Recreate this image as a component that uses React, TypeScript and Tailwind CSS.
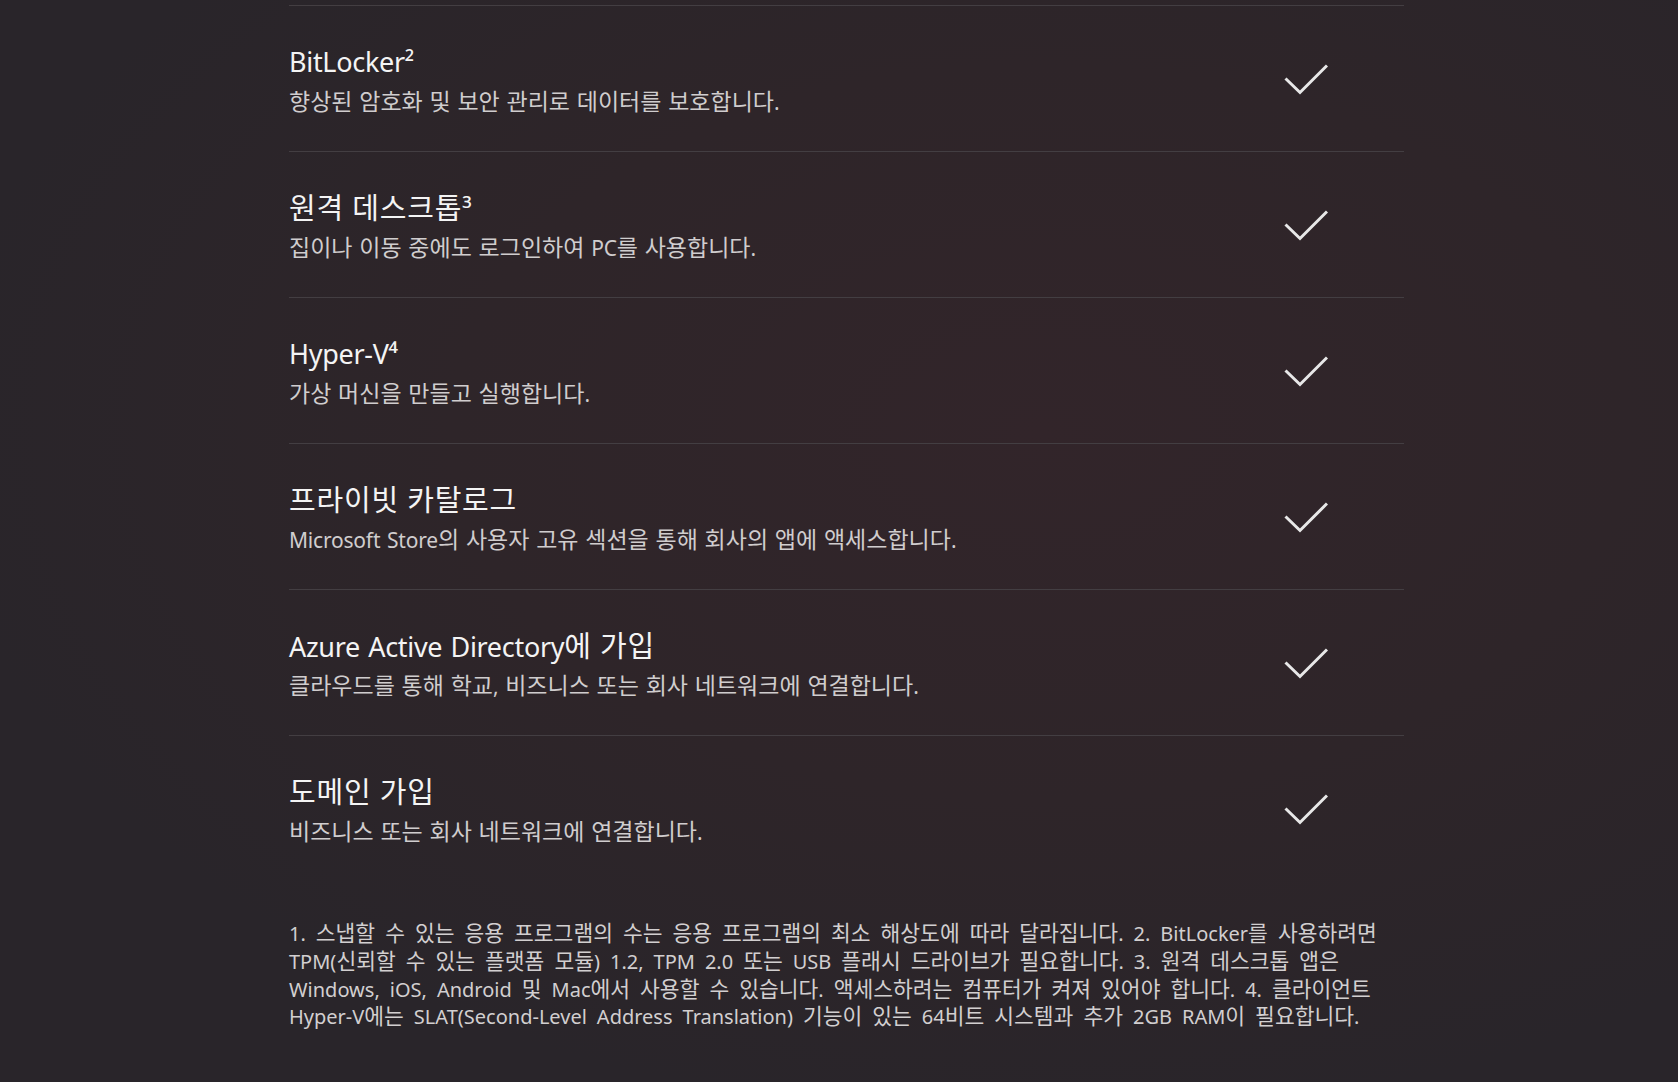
import React from "react";

const rows = [
  { t: "BitLocker²", d: "향상된 암호화 및 보안 관리로 데이터를 보호합니다." },
  { t: "원격 데스크톱³", d: "집이나 이동 중에도 로그인하여 PC를 사용합니다." },
  { t: "Hyper-V⁴", d: "가상 머신을 만들고 실행합니다." },
  { t: "프라이빗 카탈로그", d: "Microsoft Store의 사용자 고유 섹션을 통해 회사의 앱에 액세스합니다." },
  { t: "Azure Active Directory에 가입", d: "클라우드를 통해 학교, 비즈니스 또는 회사 네트워크에 연결합니다." },
  { t: "도메인 가입", d: "비즈니스 또는 회사 네트워크에 연결합니다." },
];

const footLines = [
  "1. 스냅할 수 있는 응용 프로그램의 수는 응용 프로그램의 최소 해상도에 따라 달라집니다. 2. BitLocker를 사용하려면",
  "TPM(신뢰할 수 있는 플랫폼 모듈) 1.2, TPM 2.0 또는 USB 플래시 드라이브가 필요합니다. 3. 원격 데스크톱 앱은",
  "Windows, iOS, Android 및 Mac에서 사용할 수 있습니다. 액세스하려는 컴퓨터가 켜져 있어야 합니다. 4. 클라이언트",
  "Hyper-V에는 SLAT(Second-Level Address Translation) 기능이 있는 64비트 시스템과 추가 2GB RAM이 필요합니다.",
];

function K({ text, cls }: { text: string; cls: string }) {
  const parts = text.split(/([가-힣]+)/);
  return (
    <>
      {parts.map((p, i) =>
        /[가-힣]/.test(p) ? (
          <span key={i} className={cls}>
            {p}
          </span>
        ) : (
          <React.Fragment key={i}>{p}</React.Fragment>
        )
      )}
    </>
  );
}

function Check() {
  return (
    <svg width="44" height="32" viewBox="0 0 44 32" fill="none" className="shrink-0">
      <path d="M1.5 15.5 L16 29.5 L43 2.5" stroke="#e8e8e8" strokeWidth="3" />
    </svg>
  );
}

export default function App() {
  return (
    <div
      className="h-[1082px] w-full overflow-hidden bg-[#29252a] bg-[radial-gradient(ellipse_at_62%_40%,#32252a_0%,#2e2529_40%,#29252a_75%)] pt-[5px]"
      style={{ fontFamily: "'Noto Sans', 'Noto Sans CJK KR', sans-serif" }}
    >
      <div className="ml-[289px] w-[1115px]">
        {rows.map((r) => (
          <div
            key={r.t}
            className="flex h-[146px] items-center justify-between border-t border-[#433e42] pr-[76px]"
          >
            <div className="flex flex-col pt-[3px]">
              <div className="h-[36px] whitespace-nowrap text-[27px] leading-[36px] text-[#f4f4f4] tracking-[-0.3px] [word-spacing:1.5px]">
                <K text={r.t} cls="text-[29px] tracking-[0.8px]" />
              </div>
              <div className="mt-[6px] h-[30px] whitespace-nowrap text-[21px] leading-[30px] text-[#d0cdce] tracking-[-0.2px] [word-spacing:1.5px]">
                <K text={r.d} cls="text-[23px] tracking-[0px]" />
              </div>
            </div>
            <Check />
          </div>
        ))}
        <div className="mt-[38px] text-[20px] leading-[28px] text-[#d2cfd0] tracking-[0px] [word-spacing:4.8px]">
          {footLines.map((l) => (
            <div key={l} className="h-[27.8px] whitespace-nowrap">
              <K text={l} cls="text-[21.5px]" />
            </div>
          ))}
        </div>
      </div>
    </div>
  );
}
